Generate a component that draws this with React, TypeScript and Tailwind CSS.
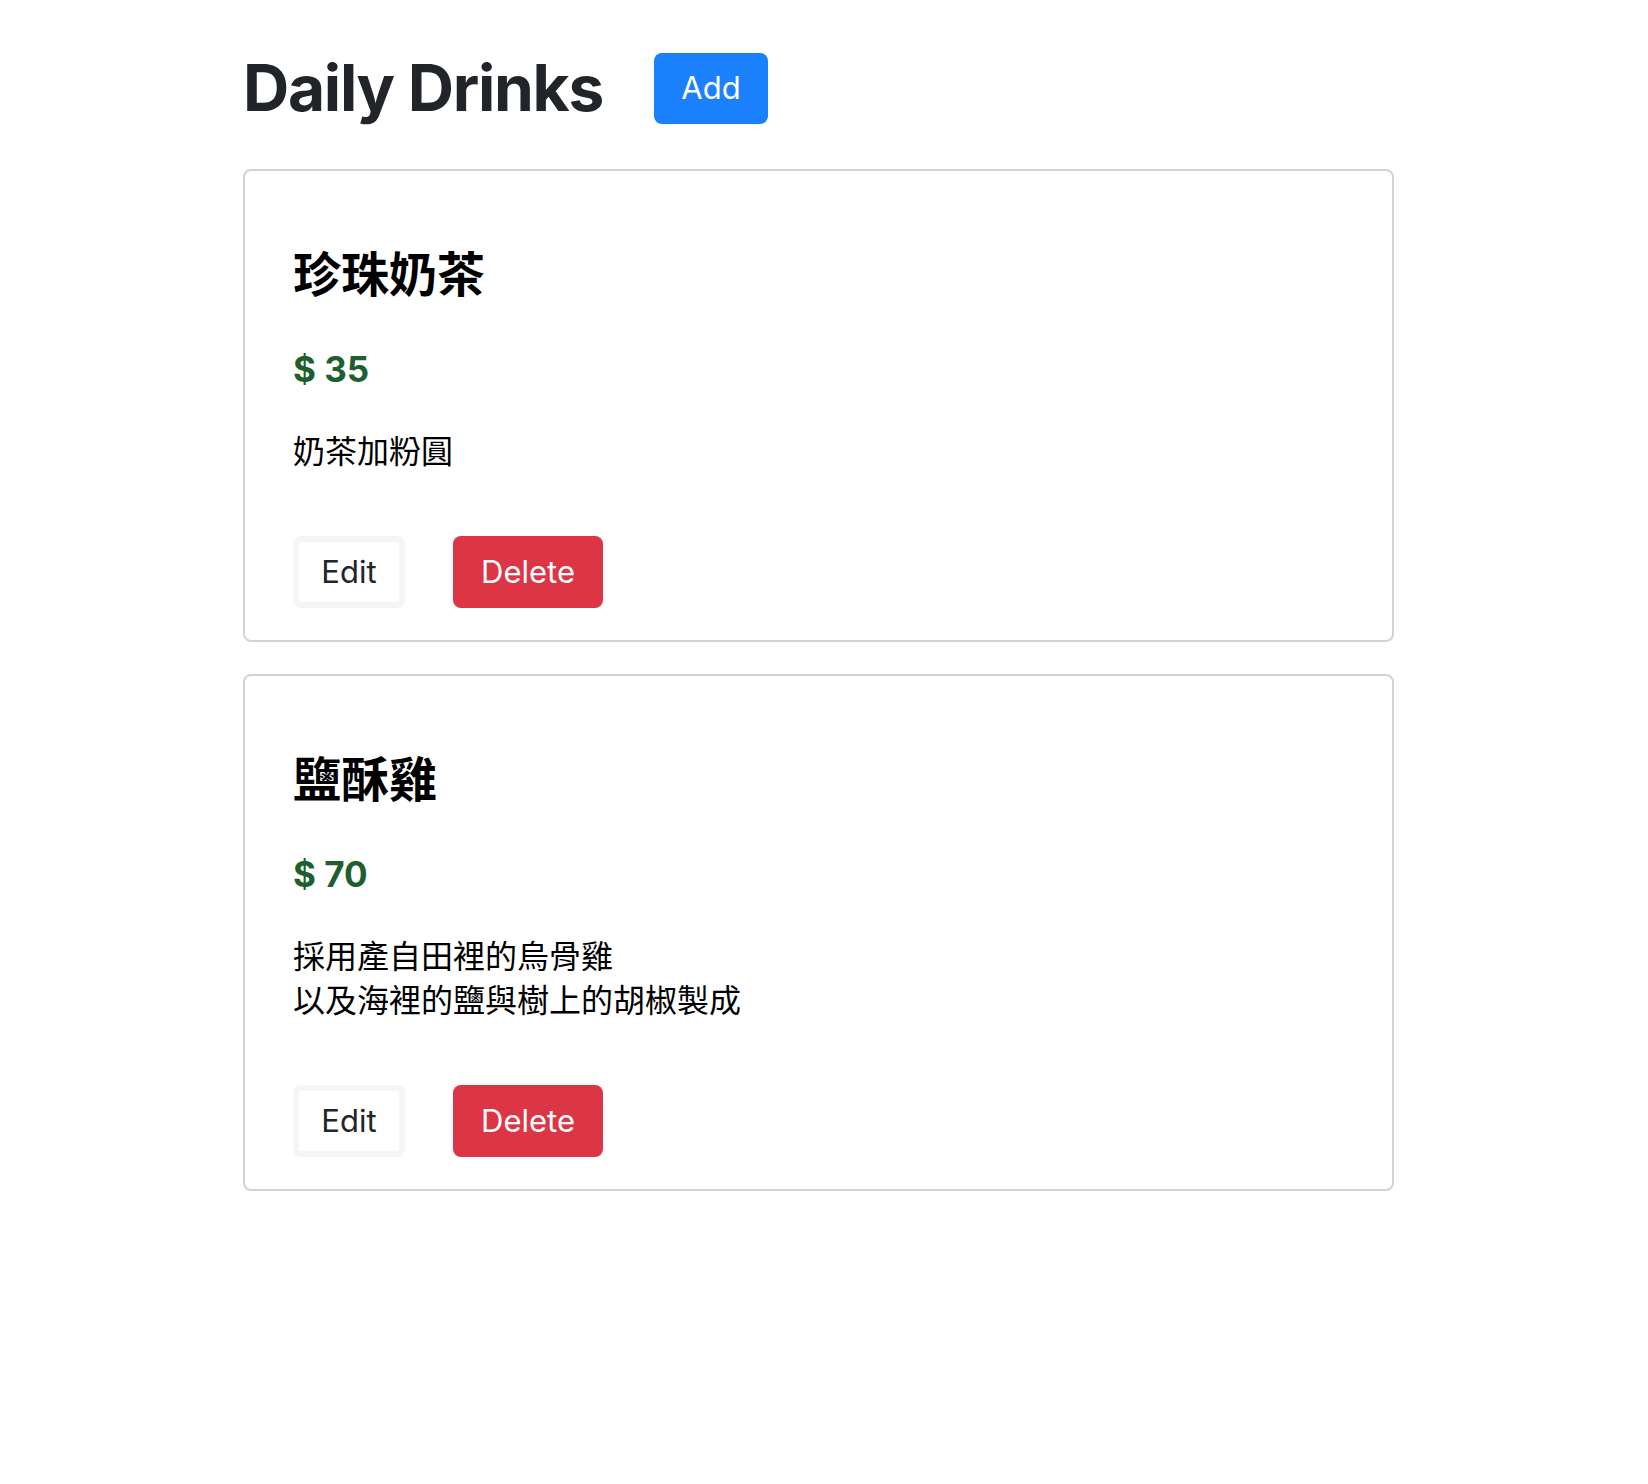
const drinks = [
  { id: 1, name: '珍珠奶茶', price: 35, desc: ['奶茶加粉圓'] },
  {
    id: 2,
    name: '鹽酥雞',
    price: 70,
    desc: ['採用產自田裡的烏骨雞', '以及海裡的鹽與樹上的胡椒製成'],
  },
];

function DrinkCard({ drink }: { drink: (typeof drinks)[number] }) {
  return (
    <div className="border-2 border-[#ced4da] rounded-lg px-[48px] pt-[72px] pb-[32px] bg-white">
      <h2 className="text-[48px] leading-[56px] font-bold text-black font-['Noto_Sans_CJK_TC',sans-serif]">
        {drink.name}
      </h2>
      <p className="mt-[49px] text-[35px] leading-[42px] font-bold text-[#1e5f2e] font-['Inter','Noto_Sans_CJK_TC',sans-serif]">
        $ {drink.price}
      </p>
      <div className="mt-[37px] text-[32px] leading-[44px] text-black font-['Noto_Sans_CJK_TC',sans-serif]">
        {drink.desc.map((line) => (
          <p key={line}>{line}</p>
        ))}
      </div>
      <div className="mt-[65px] flex items-center gap-[48px]">
        <button className="w-[112px] h-[72px] flex items-center justify-center rounded-lg border-[6px] border-[#f4f5f7] bg-white text-[31px] text-[#212529]">
          Edit
        </button>
        <button className="w-[150px] h-[72px] flex items-center justify-center rounded-lg bg-[#dc3545] text-[31px] text-white">
          Delete
        </button>
      </div>
    </div>
  );
}

export default function App() {
  return (
    <div className="min-h-screen bg-white font-['Inter',sans-serif]">
      <div className="ml-[243px] w-[1151px] pt-[50px] pb-[40px]">
        <div className="flex items-center h-[76px]">
          <h1 className="w-[411px] text-[64px] leading-[76px] font-bold tracking-[-0.02em] text-[#212529]">
            Daily Drinks
          </h1>
          <button className="w-[114px] h-[71px] flex items-center justify-center rounded-lg bg-[#1a80fb] text-[31px] text-white">
            Add
          </button>
        </div>
        <div className="mt-[43px] flex flex-col gap-[32px]">
          {drinks.map((d) => (
            <DrinkCard key={d.id} drink={d} />
          ))}
        </div>
      </div>
    </div>
  );
}
